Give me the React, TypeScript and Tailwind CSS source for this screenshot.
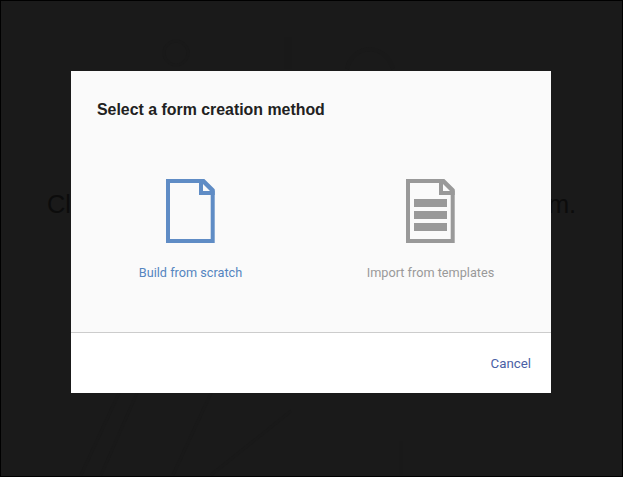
function FileIcon({ color, bars }: { color: string; bars?: boolean }) {
  return (
    <svg width="49" height="64" viewBox="0 0 49 64" className="block" fill="none">
      <path d="M2 2H37.5L46.7 11.2V62H2Z" stroke={color} strokeWidth="4" strokeLinejoin="miter" />
      <path d="M37 0L48.7 11.7V16H33V0Z" fill={color} />
      <path d="M37 5L37 12H44Z" fill="#fafafa" />
      {bars && (
        <g fill={color}>
          <rect x="8" y="20" width="33" height="8" />
          <rect x="8" y="32" width="33" height="8" />
          <rect x="8" y="44" width="33" height="8" />
        </g>
      )}
    </svg>
  );
}

export default function App() {
  return (
    <div className="relative h-[477px] w-[623px] overflow-hidden border border-black bg-[#1a1a1a] font-['Roboto',sans-serif]">
      <svg width="621" height="475" viewBox="0 0 621 475" className="absolute left-0 top-0" fill="none" stroke="#191919" strokeWidth="3">
        <circle cx="175" cy="52" r="12" />
        <path d="M287 36V68" strokeWidth="8" />
        <path d="M346 68C352 42 385 42 392 68" strokeWidth="4" />
        <path d="M118 392L80 474M136 392L100 474M210 392L172 474M290 410L210 474M400 440V474" />
      </svg>

      <div className="relative flex h-full items-center justify-center pb-[69px]">
        <p className="whitespace-nowrap font-['Liberation_Sans',sans-serif] text-[25.4px] text-[#0c0c0c]">
          Click on the button below to create a new form.
        </p>
      </div>

      <div className="absolute left-[70px] top-[70px] flex h-[322px] w-[480px] flex-col bg-white">
        <div className="h-[262px] border-b border-[#cccccc] bg-[#fafafa] px-[26px] pt-[29px]">
          <h2 className="font-['Liberation_Sans',sans-serif] text-[15.9px] font-bold leading-[20px] text-[#212121]">
            Select a form creation method
          </h2>
          <div className="mt-[59px] flex">
            <button className="flex w-[187px] flex-col items-center">
              <FileIcon color="#5f8cc5" />
              <span className="mt-[22px] text-[12.7px] leading-[16px] text-[#5585c0]">Build from scratch</span>
            </button>
            <button className="ml-[53px] flex w-[187px] flex-col items-center">
              <FileIcon color="#999999" bars />
              <span className="mt-[22px] text-[12.7px] leading-[16px] text-[#999999]">Import from templates</span>
            </button>
          </div>
        </div>
        <div className="flex flex-1 items-center justify-end pr-5 pt-0.5">
          <button className="text-[13.3px] leading-[16px] text-[#4a5fa5]">Cancel</button>
        </div>
      </div>
    </div>
  );
}
